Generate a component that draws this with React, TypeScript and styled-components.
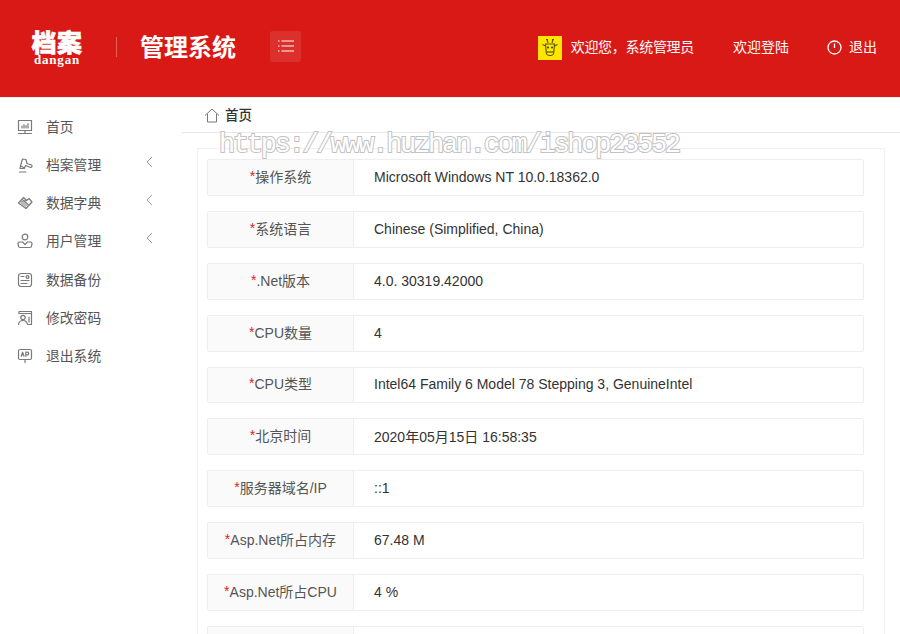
import React from "react";
import styled, { createGlobalStyle } from "styled-components";

const rows = [
  ["操作系统", "Microsoft Windows NT 10.0.18362.0"],
  ["系统语言", "Chinese (Simplified, China)"],
  [".Net版本", "4.0. 30319.42000"],
  ["CPU数量", "4"],
  ["CPU类型", "Intel64 Family 6 Model 78 Stepping 3, GenuineIntel"],
  ["北京时间", "2020年05月15日 16:58:35"],
  ["服务器域名/IP", "::1"],
  ["Asp.Net所占内存", "67.48 M"],
  ["Asp.Net所占CPU", "4 %"],
  ["", ""],
];

const stroke = {
  fill: "none",
  stroke: "#7a7a7a",
  strokeWidth: 1.2,
  strokeLinecap: "round" as const,
  strokeLinejoin: "round" as const,
};

const menu = [
  {
    title: "首页",
    icon: (
      <g>
        <rect x="1.5" y="1.5" width="13" height="10" />
        <path d="M5 9V7M7 9V5.5M9 9V6.5M11 9V4.5M8 11.5V14M1.5 14.5H14.5" />
      </g>
    ),
  },
  {
    title: "档案管理",
    arrow: true,
    icon: (
      <g>
        <path d="M3.500 9L5.500 2l3.500.5L10 6.500l4.500 1.500c1 1 .5 2.500-.8 2.500L8.500 8.500 7.500 11z" />
        <path d="M3.500 9L3 11.500h4.500M2.500 15H9" />
      </g>
    ),
  },
  {
    title: "数据字典",
    arrow: true,
    icon: (
      <g>
        <path d="M1.500 8L6.500 2.500l3 3L12 3.500 15 7l-6 6.500z" />
        <path d="M4 7l5.500-1.500M6 5l5.500 5" />
        <path d="M3.500 8.500l2.800-2.600 4.300 4.400L8 12.500z" fill="#b8b8b8" stroke="none" />
      </g>
    ),
  },
  {
    title: "用户管理",
    arrow: true,
    icon: (
      <g>
        <circle cx="8" cy="4" r="2.8" />
        <path d="M5 9H2.500a1.600 1.600 0 0 0-1.200 2.600v.9A2 2 0 0 0 3 14.500h10a2 2 0 0 0 1.700-2v-.9A1.600 1.600 0 0 0 13.500 9H11M5.500 9l2.500 2.500L10.500 9" />
      </g>
    ),
  },
  {
    title: "数据备份",
    icon: (
      <g>
        <rect x="1.5" y="1.5" width="13" height="13" rx="2.5" />
        <circle cx="10.5" cy="5" r="1.4" />
        <path d="M4 4.500h3M4 8.500h8M4 11.500h6" />
      </g>
    ),
  },
  {
    title: "修改密码",
    icon: (
      <g>
        <path d="M2 3.500V1.500h12.500V14.500H10.500M2 3.500h12.500" />
        <circle cx="6" cy="7.5" r="2.2" />
        <path d="M1.500 14.500c.4-2.600 2-4 4.500-4s4 1.400 4.500 4M12 7v5" />
      </g>
    ),
  },
  {
    title: "退出系统",
    icon: (
      <g>
        <rect x="1.5" y="1.5" width="13" height="10" rx="1.5" />
        <path d="M4.200 8.200l1.400-4 1.400 4M4.700 7h1.800M8.800 8.200v-4h1.600a1 1 0 0 1 0 2.600H8.800M8 11.500v3" />
      </g>
    ),
  },
];

export default function App() {
  return (
    <Page>
      <GlobalStyle />
      <Header>
        <Logo>
          <LogoMark>档案</LogoMark>
          <LogoSub>dangan</LogoSub>
        </Logo>
        <LogoDivider />
        <SystemName>管理系统</SystemName>
        <MenuToggle>
          <svg width="16" height="12" viewBox="0 0 16 12">
            <path
              d="M0 1h1.5M3.5 1H16M0 6h1.5M3.5 6H16M0 11h1.5M3.5 11H16"
              stroke="#fff"
              strokeWidth="1"
              fill="none"
            />
          </svg>
        </MenuToggle>
        <HeaderRight>
          <Avatar>
            <svg width="20" height="20" viewBox="0 0 20 20">
              <g fill="none" stroke="#5d5a10" strokeWidth="1.2">
                <path d="M7 1.500l1 3.500M13 1.500L12 5M6 1.500h2M12 1.500h2M2.500 6.500l3 1.500M17.500 6.500l-3 1.500" />
                <path d="M5.500 6h9l-.8 9a3 3 0 0 1-2.700 2.500H9a3 3 0 0 1-2.700-2.500z" />
                <path d="M7 14h6" />
              </g>
              <circle cx="8" cy="9.500" r="1" fill="#3e3b0c" />
              <circle cx="12" cy="9.500" r="1" fill="#3e3b0c" />
            </svg>
          </Avatar>
          <HeaderText>欢迎您，系统管理员</HeaderText>
          <HeaderLink>欢迎登陆</HeaderLink>
          <Logout>
            <svg width="15" height="15" viewBox="0 0 15 15">
              <circle cx="7.5" cy="7.5" r="6.5" fill="none" stroke="#fff" strokeWidth="1.3" />
              <path d="M7.5 3.500v4.500" stroke="#fff" strokeWidth="1.3" fill="none" />
            </svg>
            <span>退出</span>
          </Logout>
        </HeaderRight>
      </Header>
      <Body>
        <Sidebar>
          {menu.map((item) => (
            <MenuRow key={item.title}>
              <svg width="16" height="16" viewBox="0 0 16 16" {...stroke}>
                {item.icon}
              </svg>
              <MenuTitle>{item.title}</MenuTitle>
              {item.arrow && (
                <Arrow width="7" height="12" viewBox="0 0 7 12">
                  <path d="M6 1L1 6l5 5" fill="none" stroke="#999" strokeWidth="1" />
                </Arrow>
              )}
            </MenuRow>
          ))}
        </Sidebar>
        <Main>
          <Breadcrumb>
            <svg width="16" height="15" viewBox="0 0 16 15">
              <path
                d="M1 7.5L8 1l7 6.5M3.5 6v8h9V6"
                fill="none"
                stroke="#777"
                strokeWidth="1"
              />
            </svg>
            <span>首页</span>
          </Breadcrumb>
          <Panel>
            {rows.map(([label, value], i) => (
              <InfoRow key={i}>
                <InfoLabel>
                  {label && <Required>*</Required>}
                  {label}
                </InfoLabel>
                <InfoValue>{value}</InfoValue>
              </InfoRow>
            ))}
          </Panel>
          <Watermark>https://www.huzhan.com/ishop23552</Watermark>
        </Main>
      </Body>
    </Page>
  );
}

const GlobalStyle = createGlobalStyle`
  html, body {
    margin: 0;
    padding: 0;
    height: 100%;
    overflow: hidden;
    background: #fff;
  }
  body {
    font-family: "Liberation Sans", Arial, "Noto Sans CJK SC", sans-serif;
    font-size: 14px;
    color: #333;
  }
`;

const Page = styled.div`
  width: 900px;
  height: 634px;
  overflow: hidden;
`;

const Header = styled.header`
  height: 97px;
  box-sizing: content-box;
  background: #d91916;
  border-bottom: 1px solid #eee;
  display: flex;
  align-items: center;
  padding: 0 23px 0 31px;
  color: #fff;
`;

const Logo = styled.div`
  width: 52px;
  height: 38px;
  margin-bottom: 3px;
  display: flex;
  flex-direction: column;
  align-items: center;
`;

const LogoMark = styled.div`
  font-family: "Noto Sans CJK SC", sans-serif;
  font-weight: 900;
  font-size: 25px;
  line-height: 26px;
  height: 26px;
  letter-spacing: 0.5px;
  white-space: nowrap;
  -webkit-text-stroke: 0.6px #fff;
`;

const LogoSub = styled.div`
  font-family: "Liberation Serif", serif;
  font-weight: 700;
  font-size: 13px;
  line-height: 12px;
  letter-spacing: 0.8px;
`;

const LogoDivider = styled.div`
  width: 1px;
  height: 20px;
  margin: 0 23px 3px 33px;
  background: rgba(255, 255, 255, 0.3);
`;

const SystemName = styled.div`
  font-family: "Noto Sans CJK SC", sans-serif;
  font-weight: 700;
  font-size: 24px;
  line-height: 32px;
  margin-bottom: 5px;
`;

const MenuToggle = styled.div`
  width: 31px;
  height: 31px;
  margin: 0 0 5px 34px;
  border-radius: 3px;
  background: rgba(255, 255, 255, 0.1);
  display: flex;
  align-items: center;
  justify-content: center;
`;

const HeaderRight = styled.div`
  margin-left: auto;
  margin-bottom: 1px;
  display: flex;
  align-items: center;
  font-family: "Noto Sans CJK SC", sans-serif;
  font-size: 14px;
  line-height: 20px;
  & span {
    position: relative;
    top: -2px;
  }
`;

const Avatar = styled.div`
  width: 24px;
  height: 24px;
  background: #ffe600;
  display: flex;
  align-items: center;
  justify-content: center;
  margin-right: 9px;
`;

const HeaderText = styled.span`
  margin-right: 39px;
  letter-spacing: -0.3px;
`;

const HeaderLink = styled.span`
  margin-right: 38px;
`;

const Logout = styled.div`
  display: flex;
  align-items: center;
  gap: 7px;
  & svg {
    margin-bottom: 2px;
  }
`;

const Body = styled.div`
  display: flex;
  height: 536px;
`;

const Sidebar = styled.nav`
  width: 182px;
  flex: none;
  padding-top: 10px;
  box-sizing: border-box;
`;

const MenuRow = styled.div`
  height: 38.15px;
  display: flex;
  align-items: center;
  padding-left: 17px;
  position: relative;
`;

const MenuTitle = styled.span`
  margin-left: 13px;
  font-family: "Noto Sans CJK SC", sans-serif;
  font-size: 13.8px;
  line-height: 20px;
  position: relative;
  top: -1px;
  color: #555;
`;

const Arrow = styled.svg`
  position: absolute;
  left: 146px;
  top: 10px;
`;

const Main = styled.main`
  flex: 1;
  position: relative;
  min-width: 0;
`;

const Breadcrumb = styled.div`
  height: 34px;
  display: flex;
  align-items: center;
  gap: 5px;
  padding-left: 22px;
  border-bottom: 1px solid #e8e8e8;
  font-family: "Noto Sans CJK SC", sans-serif;
  font-size: 13.5px;
  font-weight: 500;
  color: #333;
  & span {
    position: relative;
    top: -1px;
  }
`;

const Panel = styled.section`
  margin: 15px 15px 0 15px;
  padding: 10px 20px 0 9px;
  border: 1px solid #f0f0f0;
  display: flex;
  flex-direction: column;
  gap: 15px;
`;

const InfoRow = styled.div`
  height: 36.88px;
  box-sizing: border-box;
  border: 1px solid #eee;
  border-radius: 2px;
  display: flex;
`;

const InfoLabel = styled.div`
  width: 146px;
  flex: none;
  background: #fafafa;
  border-right: 1px solid #eee;
  display: flex;
  align-items: center;
  justify-content: center;
  color: #555;
  font-size: 14px;
  padding-bottom: 3px;
  box-sizing: border-box;
  white-space: nowrap;
`;

const Required = styled.span`
  color: #e02020;
`;

const InfoValue = styled.div`
  padding: 0 0 1px 20px;
  display: flex;
  align-items: center;
  font-size: 14px;
  color: #333;
`;

const Watermark = styled.div`
  position: absolute;
  left: 37px;
  top: 32px;
  font-family: "Liberation Mono", monospace;
  font-size: 27px;
  line-height: 30px;
  white-space: nowrap;
  color: #fff;
  -webkit-text-stroke: 2px #c2c2c2;
  paint-order: stroke fill;
  letter-spacing: -2.27px;
  pointer-events: none;
`;
